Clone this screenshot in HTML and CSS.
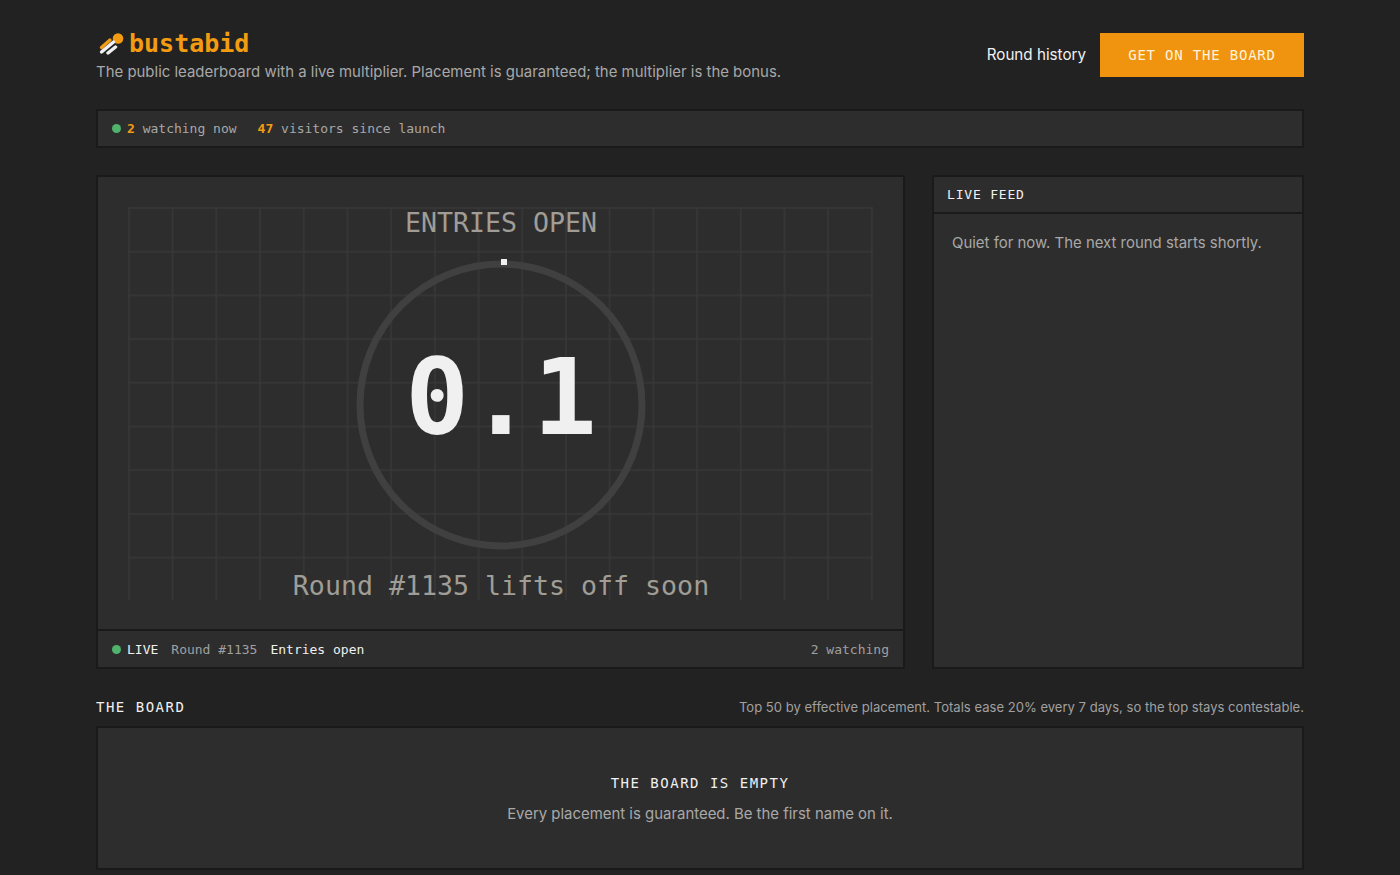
FILE: index.html
```html
<!DOCTYPE html>
<html lang="en">

<head>
    <meta charset="UTF-8">
    <meta name="viewport" content="width=device-width, initial-scale=1.0">
    <title>bustabid</title>
    <link rel="stylesheet" href="styles.css">
</head>

<body>
    <div class="page">
        <header class="site-header">
            <div class="brand">
                <div class="brand-row">
                    <svg class="logo" width="26" height="24" viewBox="0 0 26 24">
                        <circle cx="20" cy="7.5" r="5.3" fill="#f39c12"/>
                        <path d="M3.5 16.5 L12 9" stroke="#f39c12" stroke-width="3.4" stroke-linecap="round"/>
                        <path d="M3.5 21 L15.5 11" stroke="#f0f0f0" stroke-width="3.4" stroke-linecap="round"/>
                        <path d="M10 22 L17.5 16" stroke="#f0f0f0" stroke-width="3.4" stroke-linecap="round"/>
                    </svg>
                    <span class="brand-name">bustabid</span>
                </div>
                <p class="tagline">The public leaderboard with a live multiplier. Placement is guaranteed; the multiplier is the bonus.</p>
            </div>
            <nav class="header-nav">
                <a class="nav-link" href="#">Round history</a>
                <a class="cta" href="#">GET ON THE BOARD</a>
            </nav>
        </header>

        <div class="panel presence">
            <span class="dot"></span>
            <span><b>2</b> watching now</span>
            <span class="visitors"><b>47</b> visitors since launch</span>
        </div>

        <main class="game-row">
            <section class="panel stage">
                <div class="stage-canvas">
                    <svg width="745" height="393" viewBox="0 0 745 393">
                        <defs>
                            <pattern id="grid" width="43.7" height="43.7" patternUnits="userSpaceOnUse">
                                <path d="M0 1 H43.7 M1 0 V43.7" fill="none" stroke="#383838" stroke-width="1.4"/>
                            </pattern>
                        </defs>
                        <rect class="grid-area" width="745" height="393" fill="url(#grid)"/>
                        <circle cx="373" cy="198" r="141" fill="none" stroke="#404040" stroke-width="7"/>
                        <rect x="373" y="52" width="6" height="6" fill="#f0f0f0"/>
                        <text class="canvas-label" x="373" y="25">ENTRIES OPEN</text>
                        <text class="multiplier" x="373" y="227">0.1</text>
                        <text class="canvas-label" x="373" y="388">Round #1135 lifts off soon</text>
                    </svg>
                </div>
                <div class="stage-footer">
                    <span class="dot"></span>
                    <span class="live">LIVE</span>
                    <span class="muted round-no">Round #1135</span>
                    <span class="live">Entries open</span>
                    <span class="muted watching">2 watching</span>
                </div>
            </section>

            <aside class="panel feed">
                <h2 class="feed-title">LIVE FEED</h2>
                <p class="feed-empty">Quiet for now. The next round starts shortly.</p>
            </aside>
        </main>

        <section class="board">
            <div class="board-head">
                <h2 class="board-title">THE BOARD</h2>
                <p class="board-note">Top 50 by effective placement. Totals ease 20% every 7 days, so the top stays contestable.</p>
            </div>
            <div class="panel board-empty">
                <h3>THE BOARD IS EMPTY</h3>
                <p>Every placement is guaranteed. Be the first name on it.</p>
            </div>
        </section>
    </div>
</body>

</html>
```

FILE: styles.css
```css
* {
    margin: 0;
    padding: 0;
    box-sizing: border-box;
}

body {
    font-family: Inter, "Noto Sans", sans-serif;
    background-color: #222222;
    color: #f0f0f0;
}

.page {
    width: 1208px;
    margin: 0 auto;
    padding-top: 28px;
}

.panel {
    background-color: #2d2d2d;
    border: 2px solid #1a1a1a;
}

.site-header {
    display: flex;
    justify-content: space-between;
    align-items: center;
    height: 54px;
}

.brand-row {
    display: flex;
    align-items: center;
    gap: 5px;
    height: 28px;
    padding-left: 2px;
}

.brand-name {
    font-family: "DejaVu Sans Mono", monospace;
    font-size: 25px;
    font-weight: bold;
    color: #f39c12;
}

.tagline {
    margin-top: 6px;
    font-size: 14.94px;
    color: #a8a8a8;
}

.header-nav {
    display: flex;
    align-items: center;
    gap: 14px;
}

.nav-link {
    margin-top: -2px;
    font-size: 15.2px;
    color: #f0f0f0;
    text-decoration: none;
}

.cta {
    display: block;
    width: 204px;
    height: 44px;
    line-height: 44px;
    text-align: center;
    background-color: #f0940f;
    color: #fff3dc;
    font-family: "DejaVu Sans Mono", monospace;
    font-size: 14px;
    letter-spacing: 0.8px;
    text-decoration: none;
}

.presence {
    display: flex;
    align-items: center;
    height: 39px;
    margin-top: 27px;
    padding: 0 14px;
    font-family: "DejaVu Sans Mono", monospace;
    font-size: 13px;
    color: #a8a8a8;
}

.presence b {
    color: #f39c12;
}

.dot {
    width: 9px;
    height: 9px;
    margin-right: 6px;
    border-radius: 50%;
    background-color: #4fb36c;
}

.visitors {
    margin-left: 21px;
}

.game-row {
    display: flex;
    justify-content: space-between;
    height: 494px;
    margin-top: 27px;
}

.stage {
    display: flex;
    flex-direction: column;
    width: 809px;
}

.stage-canvas {
    flex: 1;
    padding: 30px 30px 0;
    border-bottom: 2px solid #1a1a1a;
}

.stage-canvas svg {
    display: block;
}

.canvas-label {
    font-family: "DejaVu Sans Mono", monospace;
    font-size: 26.6px;
    fill: #a09d96;
    text-anchor: middle;
}

.multiplier {
    font-family: "DejaVu Sans Mono", monospace;
    font-size: 106px;
    font-weight: bold;
    fill: #f0f0f0;
    text-anchor: middle;
}

.stage-footer {
    display: flex;
    align-items: center;
    height: 36px;
    padding: 0 14px;
    font-family: "DejaVu Sans Mono", monospace;
    font-size: 13px;
}

.muted {
    color: #a0a0a0;
}

.round-no {
    margin: 0 13px;
}

.watching {
    margin-left: auto;
}

.feed {
    width: 372px;
}

.feed-title {
    height: 37px;
    line-height: 36px;
    padding-left: 13px;
    border-bottom: 2px solid #1a1a1a;
    font-family: "DejaVu Sans Mono", monospace;
    font-size: 13px;
    font-weight: normal;
    letter-spacing: 0.8px;
}

.feed-empty {
    padding: 20px 18px;
    font-size: 14.93px;
    color: #a8a8a8;
}

.board {
    margin-top: 27px;
}

.board-head {
    display: flex;
    justify-content: space-between;
    align-items: center;
    height: 22px;
}

.board-title {
    font-family: "DejaVu Sans Mono", monospace;
    font-size: 14px;
    font-weight: normal;
    letter-spacing: 1.5px;
}

.board-note {
    font-size: 13.07px;
    color: #a0a0a0;
}

.board-empty {
    height: 144px;
    margin-top: 8px;
    padding-top: 47px;
    text-align: center;
}

.board-empty h3 {
    font-family: "DejaVu Sans Mono", monospace;
    font-size: 14px;
    font-weight: normal;
    letter-spacing: 1.5px;
}

.board-empty p {
    margin-top: 14px;
    font-size: 14.93px;
    color: #a8a8a8;
}
```
